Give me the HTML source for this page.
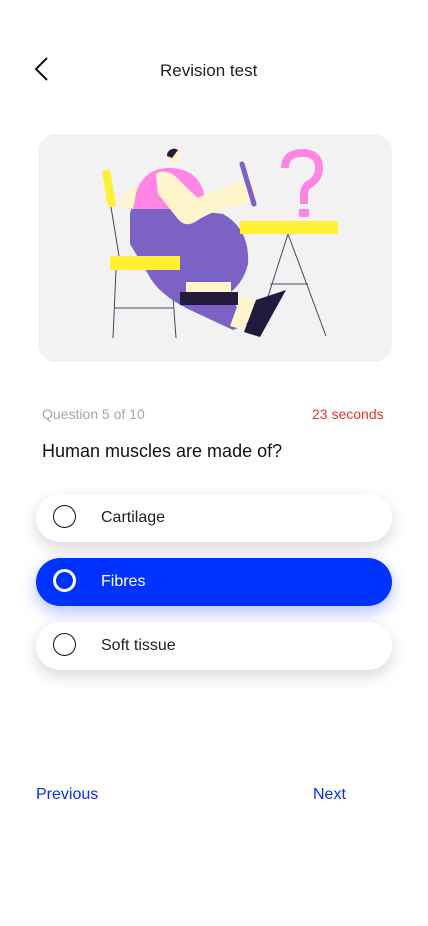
<!DOCTYPE html>
<html><head><meta charset="utf-8"><style>
body{margin:0;width:428px;height:926px;background:#fff;font-family:"Liberation Sans",sans-serif;position:relative;overflow:hidden}
.t{position:absolute;white-space:nowrap}
.opt{position:absolute;left:36px;width:356px;height:48px;border-radius:24px;background:#fff;box-shadow:0 6px 16px rgba(0,0,0,0.16)}
.opt .c{position:absolute;left:17px;top:11px;width:23px;height:23px;border:1.5px solid #111;border-radius:50%;box-sizing:border-box}
.opt .l{position:absolute;left:65px;top:15px;font-size:16px;color:#222}
</style></head><body>
<svg class="t" style="left:30px;top:56px" width="22" height="28" viewBox="0 0 22 28"><path d="M17 2 L6 13 L17 24" fill="none" stroke="#111" stroke-width="2"/></svg>
<div class="t" style="left:160px;top:61px;font-size:17px;color:#222">Revision test</div>
<div class="t" style="left:38px;top:134px;width:354px;height:228px;background:#f2f2f2;border-radius:18px;overflow:hidden">
<svg width="354" height="228" viewBox="0 0 354 228">
<g stroke="#4a4560" stroke-width="1" fill="none">
<line x1="73" y1="73" x2="81" y2="122"/><line x1="78" y1="136" x2="75" y2="204"/><line x1="133" y1="136" x2="138" y2="204"/><line x1="77" y1="174" x2="135" y2="174"/>
<line x1="250" y1="100" x2="218" y2="200"/><line x1="250" y1="100" x2="288" y2="202"/><line x1="232" y1="150" x2="270" y2="150"/>
</g>
<polygon points="64,37 72,36 78,72 70,73" fill="#fff033"/>
<path d="M92 80 Q95 60 120 72 L185 80 Q212 95 210 130 Q205 150 190 160 L210 190 L195 196 L150 175 Q120 160 110 140 L92 110 Z" fill="#7b62c4"/>
<path d="M95 72 Q100 35 130 34 Q160 34 166 60 L160 75 L95 75 Z" fill="#ff85e4"/>
<path d="M80 72 Q90 55 100 50 L95 75 Z" fill="#fff4cc"/>
<path d="M118 40 Q130 32 145 50 L160 64 Q190 50 205 48 Q218 50 220 60 Q212 70 200 72 Q180 74 160 86 Q148 95 140 85 L120 60 Z" fill="#fff4cc"/>
<line x1="204" y1="30" x2="216" y2="70" stroke="#7b62c4" stroke-width="5" stroke-linecap="round"/>
<circle cx="136" cy="22" r="7" fill="#fff4cc"/><path d="M129 22 A7 7 0 0 1 140 16 L134 24 Z" fill="#221b3d"/>
<rect x="72" y="122" width="70" height="14" fill="#fff033"/>
<rect x="148" y="148" width="45" height="12" fill="#fff4cc"/>
<rect x="142" y="158" width="58" height="13" fill="#221b3d"/>
<polygon points="203,162 218,166 206,196 192,192" fill="#fff4cc"/>
<polygon points="218,166 248,156 222,203 206,198" fill="#221b3d"/>
<rect x="202" y="87" width="98" height="13" fill="#fff033"/>
<path d="M247 34 Q247 19 264 19 Q281 19 281 34 Q281 45 270 51 Q266 54 266 62 L266 70" fill="none" stroke="#ff85e4" stroke-width="8"/>
<rect x="261" y="75" width="10" height="8" fill="#ff85e4"/>
</svg></div>
<div class="t" style="left:42px;top:406px;font-size:14px;color:#a5a5a5">Question 5 of 10</div>
<div class="t" style="left:312px;top:406px;font-size:14px;color:#e5352b">23 seconds</div>
<div class="t" style="left:42px;top:441px;font-size:18px;color:#111">Human muscles are made of?</div>
<div class="opt" style="top:494px"><div class="c"></div><div class="l">Cartilage</div></div>
<div class="opt" style="top:558px;background:#0033ff;box-shadow:0 6px 16px rgba(0,40,255,0.3)"><div class="c" style="border:3px solid #fff"></div><div class="l" style="color:#fff">Fibres</div></div>
<div class="opt" style="top:622px"><div class="c"></div><div class="l">Soft tissue</div></div>
<div class="t" style="left:36px;top:786px;font-size:16px;color:#0a2bf5">Previous</div>
<div class="t" style="left:313px;top:786px;font-size:16px;color:#0a2bf5">Next</div>
</body></html>
